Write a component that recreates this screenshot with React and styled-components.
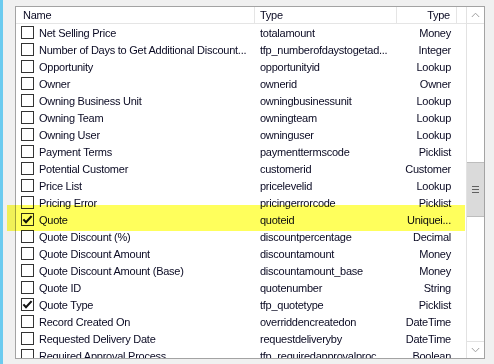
import React from "react";
import styled, { createGlobalStyle } from "styled-components";

const GlobalStyle = createGlobalStyle`
  html, body { margin: 0; padding: 0; background: #f0f0f0; overflow: hidden; }
  body { font-family: "Liberation Sans", Arial, sans-serif; font-size: 11px; letter-spacing: -0.25px; color: #0a0a23; }
`;

const Page = styled.div`
  position: relative;
  display: flex;
  width: 494px;
  height: 364px;
  background: #f0f0f0;
  isolation: isolate;
`;

const AccentStrip = styled.div`
  width: 3px;
  background: #6ccbef;
  flex: none;
`;

const Frame = styled.div`
  flex: 1;
  padding: 6px 9px 5px 12px;
  display: flex;
`;

const ListBox = styled.div`
  flex: 1;
  display: flex;
  border: 1px solid #a3a3a3;
  background: #fff;
  overflow: hidden;
`;

const Content = styled.div`
  flex: 1;
  display: flex;
  flex-direction: column;
  overflow: hidden;
`;

const COLS = "239px 142px 60px 1fr";

const Header = styled.div`
  display: grid;
  grid-template-columns: ${COLS};
  height: 16px;
  border-bottom: 1px solid #e5e5e5;
  flex: none;
`;

const HeaderCell = styled.div`
  line-height: 16px;
  padding: ${(p) => (p.$align === "right" ? "0 6px 0 0" : `0 0 0 ${p.$pad || 5}px`)};
  text-align: ${(p) => p.$align || "left"};
  border-right: ${(p) => (p.$last ? "none" : "1px solid #e5e5e5")};
  white-space: nowrap;
  overflow: hidden;
`;

const Row = styled.div`
  display: grid;
  grid-template-columns: ${COLS};
  height: 17px;
  flex: none;
  align-items: center;
`;

const NameCell = styled.div`
  display: flex;
  align-items: center;
  gap: 5px;
  padding-left: 5px;
  white-space: nowrap;
  overflow: hidden;
`;

const Cell = styled.div`
  white-space: nowrap;
  overflow: hidden;
  padding: ${(p) => (p.$align === "right" ? "0 6px 0 0" : "0 0 0 5px")};
  text-align: ${(p) => p.$align || "left"};
`;

const Box = styled.span`
  width: 11px;
  height: 11px;
  border: 1px solid #333;
  background: #fff;
  flex: none;
  display: flex;
  align-items: center;
  justify-content: center;
`;

const ScrollBar = styled.div`
  width: 17px;
  border-left: 1px solid #e2e2e2;
  display: flex;
  flex-direction: column;
  flex: none;
  background: #fff;
`;

const ArrowButton = styled.div`
  height: 16px;
  display: flex;
  align-items: center;
  justify-content: center;
  border-bottom: ${(p) => (p.$dir === "up" ? "1px solid #e2e2e2" : "none")};
  border-top: ${(p) => (p.$dir === "down" ? "1px solid #e2e2e2" : "none")};
  flex: none;
`;

const Track = styled.div`
  flex: 1;
  display: flex;
  flex-direction: column;
`;

const Thumb = styled.div`
  margin-top: ${(p) => p.$offset}px;
  height: 53px;
  background: #dadada;
  border-top: 1px solid #bdbdbd;
  border-bottom: 1px solid #bdbdbd;
  display: flex;
  flex-direction: column;
  align-items: center;
  justify-content: center;
  gap: 2px;
`;

const Grip = styled.span`
  width: 7px;
  height: 1px;
  background: #606060;
`;

const Highlight = styled.div`
  position: absolute;
  left: 7px;
  top: 205px;
  width: 458px;
  height: 26px;
  background: #ffff5c;
  mix-blend-mode: multiply;
  pointer-events: none;
`;

const Check = () => (
  <svg width="11" height="11" viewBox="0 0 11 11">
    <path d="M1.4 5.4 L4 8.2 L9.6 2.1" fill="none" stroke="#111" strokeWidth="2.1" />
  </svg>
);

const Chevron = ({ dir }) => (
  <svg width="9" height="6" viewBox="0 0 9 6">
    <path
      d={dir === "up" ? "M0.8 5 L4.5 1.2 L8.2 5" : "M0.8 1 L4.5 4.8 L8.2 1"}
      fill="none"
      stroke="#a0a0a0"
      strokeWidth="1"
    />
  </svg>
);

const rows = [
  ["Net Selling Price", "totalamount", "Money"],
  ["Number of Days to Get Additional Discount...", "tfp_numberofdaystogetad...", "Integer"],
  ["Opportunity", "opportunityid", "Lookup"],
  ["Owner", "ownerid", "Owner"],
  ["Owning Business Unit", "owningbusinessunit", "Lookup"],
  ["Owning Team", "owningteam", "Lookup"],
  ["Owning User", "owninguser", "Lookup"],
  ["Payment Terms", "paymenttermscode", "Picklist"],
  ["Potential Customer", "customerid", "Customer"],
  ["Price List", "pricelevelid", "Lookup"],
  ["Pricing Error", "pricingerrorcode", "Picklist"],
  ["Quote", "quoteid", "Uniquei...", true],
  ["Quote Discount (%)", "discountpercentage", "Decimal"],
  ["Quote Discount Amount", "discountamount", "Money"],
  ["Quote Discount Amount (Base)", "discountamount_base", "Money"],
  ["Quote ID", "quotenumber", "String"],
  ["Quote Type", "tfp_quotetype", "Picklist", true],
  ["Record Created On", "overriddencreatedon", "DateTime"],
  ["Requested Delivery Date", "requestdeliveryby", "DateTime"],
  ["Required Approval Process", "tfp_requiredapprovalproc", "Boolean"],
];

export default function App() {
  return (
    <>
      <GlobalStyle />
      <Page>
        <AccentStrip />
        <Frame>
          <ListBox>
            <Content>
              <Header>
                <HeaderCell $pad={7}>Name</HeaderCell>
                <HeaderCell>Type</HeaderCell>
                <HeaderCell $align="right">Type</HeaderCell>
                <HeaderCell $last />
              </Header>
              {rows.map(([name, logical, type, checked]) => (
                <Row key={name}>
                  <NameCell>
                    <Box>{checked && <Check />}</Box>
                    {name}
                  </NameCell>
                  <Cell>{logical}</Cell>
                  <Cell $align="right">{type}</Cell>
                  <Cell />
                </Row>
              ))}
            </Content>
            <ScrollBar>
              <ArrowButton $dir="up">
                <Chevron dir="up" />
              </ArrowButton>
              <Track>
                <Thumb $offset={138}>
                  <Grip />
                  <Grip />
                  <Grip />
                </Thumb>
              </Track>
              <ArrowButton $dir="down">
                <Chevron dir="down" />
              </ArrowButton>
            </ScrollBar>
          </ListBox>
        </Frame>
        <Highlight />
      </Page>
    </>
  );
}
